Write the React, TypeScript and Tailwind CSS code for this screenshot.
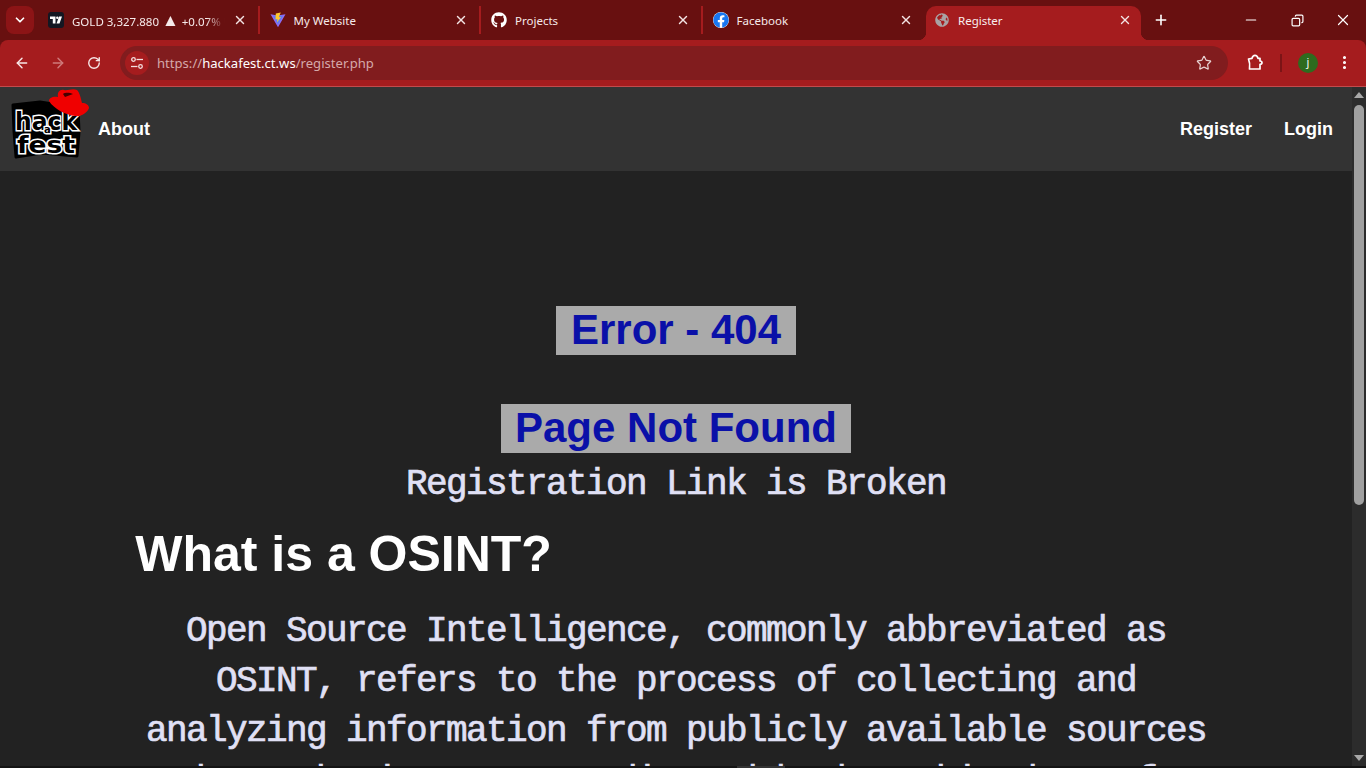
import React from 'react';
import { ArrowLeft, ArrowRight, ChevronDown, Copy, Minus, MoreVertical, Plus, RotateCw, Star, X } from 'lucide-react';
import { FaFacebook, FaGithub, FaGlobeAmericas } from 'react-icons/fa';

const TvIcon = () => (
  <svg width="16" height="16" viewBox="0 0 16 16">
    <rect width="16" height="16" rx="3" fill="#131722" />
    <path d="M2 4.500H7.500V11.500H4.800V7H2zM11 4.500H14L11.500 11.500H8.500z" fill="#fff" />
    <circle cx="9.300" cy="5.700" r="1.200" fill="#fff" />
  </svg>
);

const ViteIcon = () => (
  <svg width="16" height="16" viewBox="0 0 16 16">
    <path d="M0.500 2.200L7.500 3.400 15.500 2.200 8 15.300z" fill="#8e6cf5" />
    <path d="M2.800 3.500L7.600 4.200 13.200 3.500 8 12.800z" fill="#5f7df0" />
    <path d="M10.800 0.500L5.800 1.500 5.500 7.500 7.500 7 7 10.500 11 5 8.800 5.300z" fill="#fdc92d" />
  </svg>
);

const TuneIcon = () => (
  <svg width="14" height="14" viewBox="0 0 14 14" fill="none" stroke="#f3dede" strokeWidth="1.300">
    <circle cx="3.500" cy="3.500" r="1.800" />
    <path d="M6.500 3.500H13" />
    <circle cx="10.500" cy="10.500" r="1.800" />
    <path d="M1 10.500H7.500" />
  </svg>
);

const ExtensionIcon = () => (
  <svg width="16" height="17" viewBox="0 0 16 17" fill="none" stroke="#fff" strokeWidth="1.700" strokeLinejoin="round">
    <path d="M1.500 5L5 4.300C5.500 2.300 6.500 1.300 8 1.300 9.500 1.300 10.500 2.300 11 4.300H13V7C14.500 7 15 7.700 15 8.700 15 9.700 14.500 10.300 13 10.300V15H2.500C2.800 12.500 2.800 8 1.500 5Z" />
  </svg>
);

const Logo = () => (
  <svg width="80" height="72" viewBox="0 0 80 72">
    <path d="M3 18L30 15 68 21 69 45 67 69 32 66 6 70 4 44Z" fill="#000" stroke="#000" strokeWidth="3" strokeLinejoin="round" />
    <g fontFamily="'DejaVu Sans', sans-serif" fontWeight="700" fill="#000" stroke="#fff" strokeWidth="3" paintOrder="stroke">
      <text x="5" y="43" fontSize="25" textLength="62" lengthAdjust="spacingAndGlyphs">hack</text>
      <text x="34" y="46" fontSize="10">a</text>
      <text x="7" y="66" fontSize="23" textLength="58" lengthAdjust="spacingAndGlyphs">fest</text>
    </g>
    <path d="M48 10C47 5 50 2 54 3 58 4 62 1 67 3 70 6 71 12 72 16 76 16 79 18 79 21 77 26 71 30 65 29 56 28 44 22 39 14 39 11 43 9 48 10Z" fill="#f00000" />
    <path d="M53 7C56 5 60 6 63 7L55 10Z" fill="#400" />
  </svg>
);

const tabs = [
  { icon: <TvIcon />, title: <>GOLD 3,327.880 <span className="text-[17px] leading-none">▲</span> +0.07% Unrealized</>, key: 'gold', fade: true },
  { icon: <ViteIcon />, title: 'My Website', key: 'site' },
  { icon: <FaGithub size={16} color="#fff" />, title: 'Projects', key: 'gh' },
  { icon: <FaFacebook size={16} color="#1877f2" className="bg-white rounded-full" />, title: 'Facebook', key: 'fb' },
];

const Tab = ({ icon, title, fade, last }: { icon: React.ReactNode; title: React.ReactNode; fade?: boolean; last?: boolean }) => (
  <div className="w-[221.5px] h-[34px] flex items-center pb-[6px]">
    <div className={`w-full h-[28px] flex items-center pl-[10px] pr-[11px] ${last ? '' : 'border-r-2 border-[#a51c1e]'}`}>
      <span className="w-4 h-4 shrink-0 flex">{icon}</span>
      <span className={`ml-2 pt-[1px] flex-1 min-w-0 whitespace-nowrap overflow-hidden text-[11.500px] text-[#f6eaea] ${fade ? '[mask-image:linear-gradient(to_right,black_88%,transparent)]' : ''}`}>{title}</span>
      <X size={14} strokeWidth={2.4} color="#f3e4e4" className="ml-2 shrink-0" />
    </div>
  </div>
);

export default function App() {
  return (
    <div className="h-screen w-full overflow-hidden flex flex-col bg-[#681010] font-['Noto_Sans','Open_Sans',sans-serif]">
      {/* tab strip */}
      <div className="h-[40px] shrink-0 flex items-end bg-[#681010]">
        <div className="w-[38px] h-[40px] shrink-0 flex items-center pl-[6px]">
          <div className="w-[28px] h-[28px] rounded-lg bg-[#8c1416] flex items-center justify-center">
            <ChevronDown size={14} strokeWidth={3} color="#fff" />
          </div>
        </div>
        {tabs.map((t, i) => (
          <Tab key={t.key} icon={t.icon} title={t.title} fade={t.fade} last={i === 3} />
        ))}
        <div className="relative w-[215px] h-[34px] ml-[2px] rounded-t-[10px] bg-[#a51c1e] flex items-center pl-[9px] pr-[9px] pb-[6px]">
          <span className="absolute left-[-8px] bottom-0 w-2 h-2 bg-[radial-gradient(circle_at_0_0,transparent_8px,#a51c1e_8.500px)]" />
          <span className="absolute right-[-8px] bottom-0 w-2 h-2 bg-[radial-gradient(circle_at_100%_0,transparent_8px,#a51c1e_8.500px)]" />
          <FaGlobeAmericas size={14} color="#a9a2a4" className="shrink-0" />
          <span className="ml-[9px] pt-[1px] flex-1 text-[11.500px] text-[#f8eeee]">Register</span>
          <X size={14} strokeWidth={2.4} color="#f3e4e4" className="shrink-0" />
        </div>
        <div className="w-[40px] h-[40px] flex items-center justify-center">
          <Plus size={16} strokeWidth={2.4} color="#fff" />
        </div>
        <div className="flex-1 h-[40px] flex items-center justify-end">
          <div className="w-[46px] flex justify-center"><Minus size={16} strokeWidth={1.8} color="#fff" /></div>
          <div className="w-[46px] flex justify-center"><Copy size={13} strokeWidth={2.2} color="#fff" className="-scale-x-100" /></div>
          <div className="w-[46px] flex justify-center"><X size={18} strokeWidth={1.6} color="#fff" /></div>
        </div>
      </div>

      {/* toolbar */}
      <div className="h-[47px] shrink-0 flex items-center rounded-t-lg bg-[#a51c1e] border-b border-[#c24a4c] pb-[1px]">
        <div className="w-[44px] flex justify-center"><ArrowLeft size={16} strokeWidth={2.2} color="#f7e6e6" /></div>
        <div className="w-[28px] flex justify-center"><ArrowRight size={16} strokeWidth={2.2} color="#cf7a7b" /></div>
        <div className="w-[44px] flex justify-center"><RotateCw size={14} strokeWidth={2.4} color="#f7e6e6" /></div>
        <div className="ml-[4px] w-[1108px] h-[34px] rounded-full bg-[#811c1e] flex items-center pl-[5px] pr-[16px]">
          <div className="w-[24px] h-[24px] rounded-full bg-[#a51c1e] flex items-center justify-center">
            <TuneIcon />
          </div>
          <span className="ml-[8px] pt-[2px] flex-1 text-[13.100px] text-[#d5a9aa]">
            https://<span className="text-white">hackafest.ct.ws</span>/register.php
          </span>
          <Star size={16} strokeWidth={1.8} color="#e8d2d2" />
        </div>
        <div className="ml-[17px] w-[20px] flex justify-center"><ExtensionIcon /></div>
        <div className="ml-[15px] w-[2px] h-[18px] bg-[#7c1416]" />
        <div className="ml-[16px] w-[20px] h-[20px] rounded-full bg-[#2e6b1e] text-white text-[11px] flex items-center justify-center">j</div>
        <div className="ml-[16px] w-[20px] flex justify-center"><MoreVertical size={17} strokeWidth={2.4} color="#fff" /></div>
      </div>

      {/* page */}
      <div className="flex-1 min-h-0 flex bg-[#222222]">
        <div className="flex-1 min-w-0 overflow-hidden font-['Liberation_Sans',Arial,sans-serif]">
          <nav className="h-[84px] flex items-start bg-[#333333]">
            <div className="ml-[10px] flex"><Logo /></div>
            <a className="ml-[8px] mt-[32px] text-[18px] leading-[21px] font-bold text-white">About</a>
            <div className="ml-auto mt-[32px] flex gap-[32px] pr-[19px] text-[18px] leading-[21px] font-bold text-white">
              <a>Register</a>
              <a>Login</a>
            </div>
          </nav>
          <div className="pt-[135px] flex flex-col items-center">
            <h1 className="h-[49px] px-[14.500px] bg-[#aaaaaa] text-[42px] leading-[48px] font-bold text-[#0a10a8]">Error - 404</h1>
            <h1 className="mt-[49px] h-[49px] px-[14px] bg-[#aaaaaa] text-[42px] leading-[48px] font-bold text-[#0a10a8]">Page Not Found</h1>
            <p className="mt-[7px] font-['Liberation_Mono',monospace] text-[36px] tracking-[-1.600px] leading-[50px] text-[#e0e0f5] [-webkit-text-stroke:0.7px_#e0e0f5]">Registration Link is Broken</p>
          </div>
          <section className="w-4/5 mx-auto">
            <h2 className="mt-[17px] text-[50px] leading-[55px] font-bold text-white">What is a OSINT?</h2>
            <p className="mt-[25px] font-['Liberation_Mono',monospace] text-[36px] tracking-[-1.600px] leading-[50px] text-[#e0e0f5] [-webkit-text-stroke:0.7px_#e0e0f5] text-center">
              Open Source Intelligence, commonly abbreviated as OSINT, refers to the process of collecting and analyzing information from publicly available sources such as the internet, media and books. This data often supports research and investigations.
            </p>
          </section>
        </div>
        {/* scrollbar */}
        <div className="w-[14px] shrink-0 flex flex-col items-center bg-[#2c2c2c]">
          <div className="mt-[5px] w-0 h-0 border-x-[5px] border-x-transparent border-b-[6px] border-b-[#a8a8a8]" />
          <div className="mt-[7px] w-[10px] h-[400px] rounded-t-[5px] rounded-b-[5px] bg-[#a0a0a0]" />
          <div className="mt-auto mb-[5px] w-0 h-0 border-x-[5px] border-x-transparent border-t-[6px] border-t-[#a8a8a8]" />
        </div>
      </div>

      {/* window edge */}
      <div className="h-[2px] shrink-0 bg-[#141414]">
        <div className="ml-[737px] w-[48px] h-full bg-[#333333]" />
      </div>
    </div>
  );
}
